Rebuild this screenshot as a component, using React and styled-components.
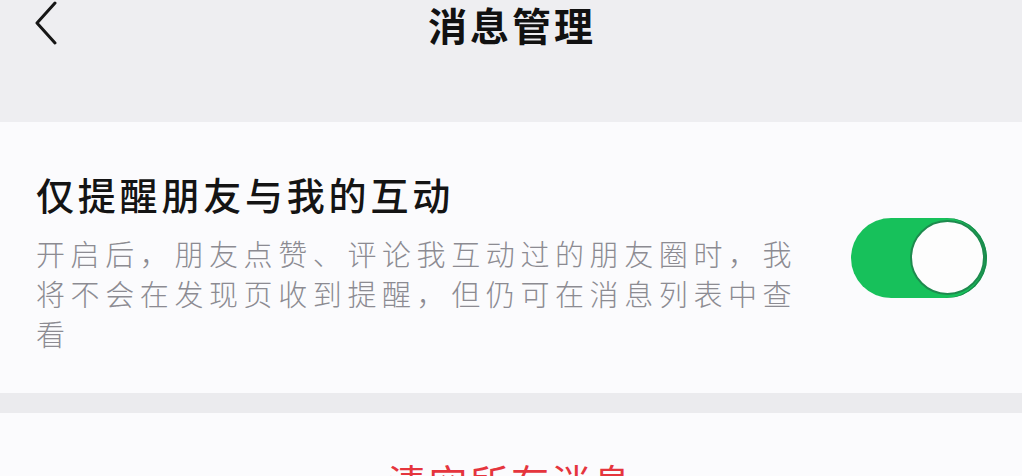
import React from "react";
import styled, { createGlobalStyle } from "styled-components";

const GlobalStyle = createGlobalStyle`
    * { box-sizing: border-box; }
    html, body {
        margin: 0;
        padding: 0;
        background: #eeeef1;
        font-family: "Noto Sans CJK SC", "Noto Sans", sans-serif;
    }
`;

function BackIcon() {
    return (
        <svg width="24" height="44" viewBox="0 0 24 44">
            <polyline
                points="21,2 3,22 21,42"
                fill="none"
                stroke="#161616"
                strokeWidth="3"
                strokeLinecap="round"
                strokeLinejoin="round"
            />
        </svg>
    );
}

function App() {
    return (
        <Page>
            <GlobalStyle />
            <Header>
                <BackButton>
                    <BackIcon />
                </BackButton>
                <HeaderTitle>消息管理</HeaderTitle>
            </Header>
            <Card>
                <SettingRow>
                    <SettingText>
                        <SettingTitle>仅提醒朋友与我的互动</SettingTitle>
                        <SettingDesc>
                            开启后，朋友点赞、评论我互动过的朋友圈时，我将不会在发现页收到提醒，但仍可在消息列表中查看
                        </SettingDesc>
                    </SettingText>
                    <Toggle $on>
                        <Knob />
                    </Toggle>
                </SettingRow>
            </Card>
            <Divider />
            <Card>
                <DangerButton>清空所有消息</DangerButton>
            </Card>
        </Page>
    );
}

export default App;

const Page = styled.div`
    width: 1022px;
    height: 476px;
    overflow: hidden;
    background: #eeeef1;
`;

const Header = styled.div`
    position: relative;
    height: 122px;
    display: flex;
    justify-content: center;
    align-items: flex-start;
    padding-top: 0;
`;

const BackButton = styled.div`
    position: absolute;
    left: 34px;
    top: 1px;
`;

const HeaderTitle = styled.h1`
    margin: 0;
    font-size: 39px;
    line-height: 48px;
    font-weight: 700;
    letter-spacing: 3px;
    color: #111;
    padding-left: 2px;
`;

const Card = styled.div`
    background: #fbfbfd;
`;

const SettingRow = styled.div`
    display: flex;
    align-items: center;
    justify-content: space-between;
    height: 271px;
    padding: 0 35px 0 36px;
`;

const SettingText = styled.div`
    display: flex;
    flex-direction: column;
    gap: 14px;
    padding-top: 6px;
`;

const SettingTitle = styled.div`
    font-size: 38px;
    line-height: 50px;
    font-weight: 500;
    letter-spacing: 3.8px;
    color: #141414;
`;

const SettingDesc = styled.div`
    width: 775px;
    font-size: 29px;
    line-height: 40px;
    font-weight: 300;
    letter-spacing: 5.6px;
    color: #8c8b92;
`;

const Toggle = styled.div`
    width: 136px;
    height: 80px;
    border-radius: 40px;
    background: ${({ $on }) => ($on ? "#17c15b" : "#e4e4e8")};
    display: flex;
    align-items: center;
    justify-content: ${({ $on }) => ($on ? "flex-end" : "flex-start")};
    padding: 2px;
    flex-shrink: 0;
    box-shadow: inset -2px 0 0 #1a8a4c;
`;

const Knob = styled.div`
    width: 75px;
    height: 75px;
    border-radius: 50%;
    background: #fdfdfd;
    border: 2px solid #1e8a4e;
`;

const Divider = styled.div`
    height: 20px;
    background: #ebebee;
`;

const DangerButton = styled.div`
    height: 63px;
    display: flex;
    justify-content: center;
    align-items: flex-start;
    padding-top: 44px;
    font-size: 38px;
    line-height: 48px;
    letter-spacing: 3px;
    color: #e5353d;
`;
